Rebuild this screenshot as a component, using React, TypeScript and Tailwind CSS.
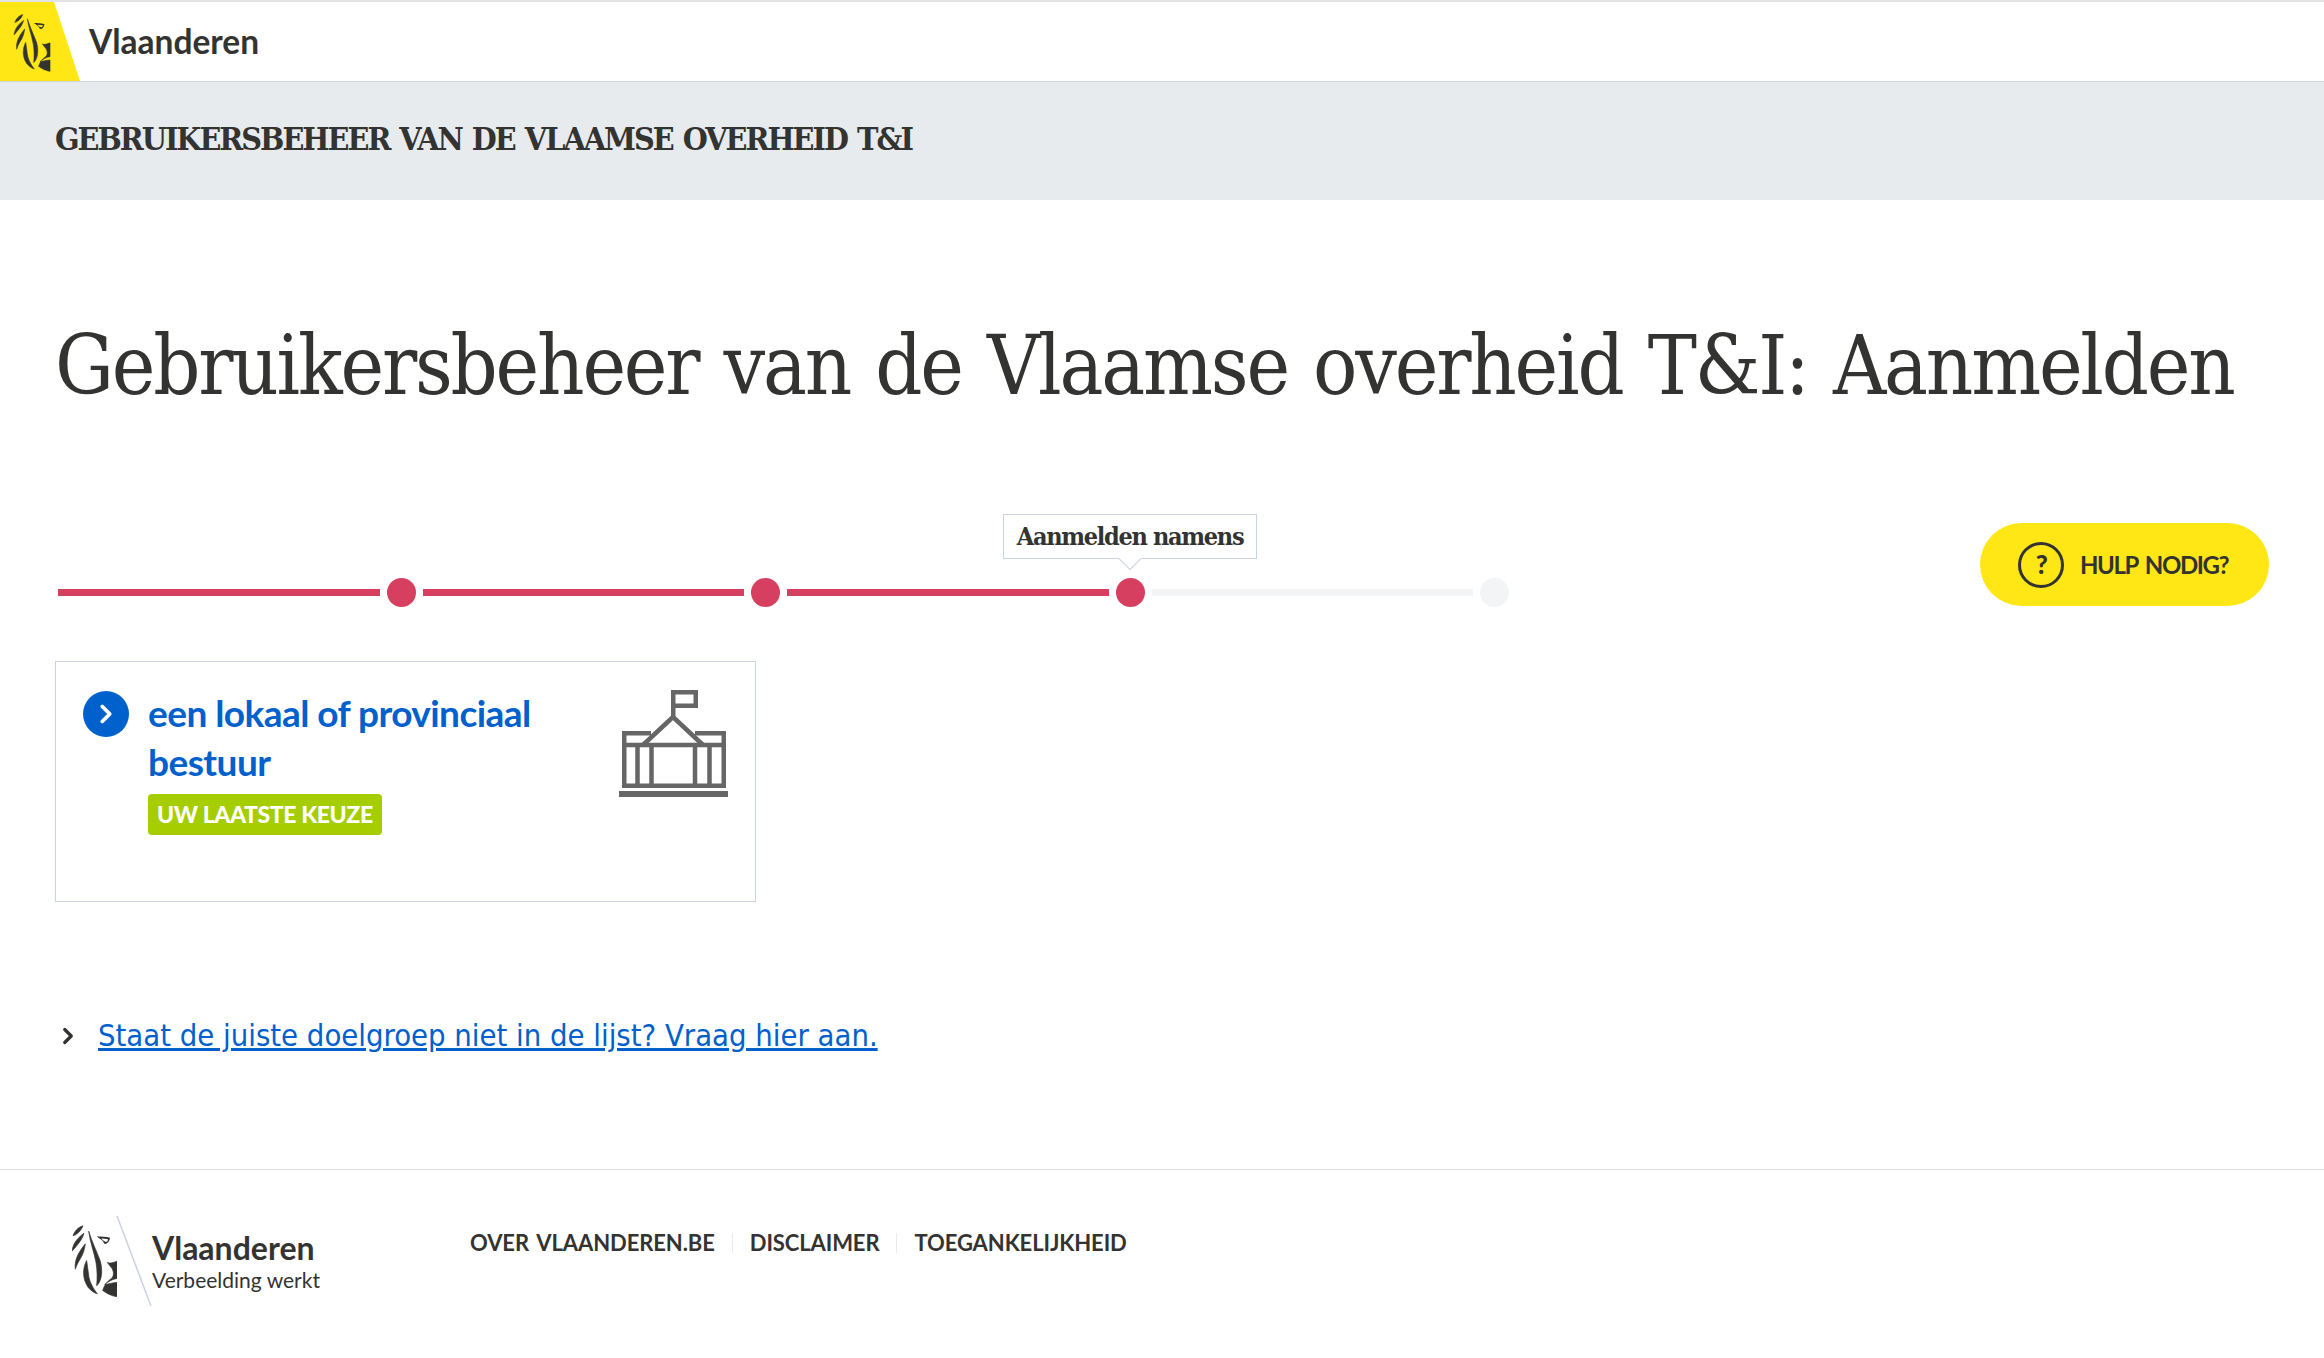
import { ChevronRight } from "lucide-react";

function LionPaths() {
    return (
        <g fill="#333332" stroke="#333332" strokeWidth="2">
            <path d="M33 2 C20 6 8 16 3 32 C16 28 28 16 33 2Z" />
            <path d="M36 24 C20 36 3 52 0 78 C6 72 9 68 14 62 C22 52 32 40 36 24Z" />
            <path d="M40 56 C24 76 6 100 10 132 C14 120 18 112 24 102 C32 90 38 74 40 56Z" />
            <path d="M44 106 C32 128 30 160 48 186 C56 196 66 203 76 206 C64 190 52 170 50 150 C48 135 46 120 44 106Z" />
            <path d="M50 18 C54 50 66 80 72 112 C76 136 76 160 74 182 C92 165 92 130 84 105 C74 78 60 50 50 18Z" />
            <path fillRule="evenodd" stroke="none" d="M74 34 C88 34 102 34 114 38 C113 50 104 58 97 56 C94 46 84 41 74 34Z M88 40 C93 47 99 50 105 50 C107 47 108 45 108 42 C102 41 95 40 88 40Z" />
            <path d="M106 112 C114 116 124 112 135 108 L135 160 C122 162 110 168 98 178 C106 178 122 172 135 172 L135 215 C118 212 104 205 92 196 C96 182 104 170 118 160 C126 154 126 140 120 130 C116 124 110 118 106 112Z" />
        </g>
    );
}

function BuildingIcon() {
    return (
        <svg viewBox="0 0 110 108" className="-mt-[1px] h-[108px] w-[110px]" fill="none" stroke="#666666" strokeWidth="4.5">
            <path d="M54.25 27 V2.25 H76.75 V15.75 H54.25" />
            <path d="M54 27 L24 55 M54 27 L84 55" />
            <path d="M32 43.25 H5.25 V95.75 H104.75 V43.25 H76" />
            <path d="M5 55 H105" />
            <path d="M18.5 55 V96 M32.5 55 V96 M76 55 V96 M90.5 55 V96" />
            <path d="M0 104 H109" strokeWidth="6" />
        </svg>
    );
}

function StepLine({ done }: { done: boolean }) {
    return <div className={done ? "h-[7px] w-[321.5px] bg-[#d63f5f]" : "h-[7px] w-[321.5px] bg-[#f3f4f6]"} />;
}

function StepDot({ done }: { done: boolean }) {
    return <div className={done ? "h-[29px] w-[29px] rounded-full bg-[#d63f5f]" : "h-[29px] w-[29px] rounded-full bg-[#f3f4f6]"} />;
}

export default function App() {
    return (
        <div className="flex min-h-[1358px] flex-col overflow-hidden bg-white text-[#333332] [font-family:Lato,sans-serif]">
            {/* Header */}
            <header className="flex h-[82px] items-center border-t-2 border-b border-t-[#e2e3e4] border-b-[#cfd5dd]">
                <svg viewBox="0 0 80 79" className="h-[79px] w-[80px] shrink-0">
                    <polygon points="0,0 54,0 80,79 0,79" fill="#ffe615" />
                    <g transform="translate(14 12) scale(0.267)">
                        <LionPaths />
                    </g>
                </svg>
                <span className="ml-[9px] text-[33.5px] font-bold leading-none">Vlaanderen</span>
            </header>
            <div className="flex h-[118px] items-center bg-[#e8ebee] pb-[4px] pl-[55px]">
                <h2 className="text-[32px] font-bold leading-none tracking-[-2px] [font-family:'DejaVu_Serif',serif] [font-stretch:condensed] [word-spacing:2px]">
                    GEBRUIKERSBEHEER VAN DE VLAAMSE OVERHEID T&amp;I
                </h2>
            </div>

            {/* Main */}
            <main className="flex-1 px-[55px]">
                <h1 className="mt-[113px] text-[82px] font-normal leading-[105px] tracking-[-2.2px] whitespace-nowrap [font-family:'DejaVu_Serif',serif] [font-stretch:condensed] [word-spacing:4px]">
                    Gebruikersbeheer van de Vlaamse overheid T&amp;I: Aanmelden
                </h1>

                <div className="mt-[96px] flex items-start justify-between">
                    <div className="relative flex items-center gap-[7px] pl-[3px] pt-[64px]">
                        <StepLine done />
                        <StepDot done />
                        <StepLine done />
                        <StepDot done />
                        <StepLine done />
                        <StepDot done />
                        <StepLine done={false} />
                        <StepDot done={false} />
                        <div className="absolute left-[948px] top-0 flex h-[45px] w-[254px] items-center justify-center border border-[#cbd2e0] bg-white text-[25px] font-bold tracking-[-1.3px] whitespace-nowrap [font-family:'DejaVu_Serif',serif] [font-stretch:condensed]">
                            Aanmelden namens
                            <span className="absolute -bottom-[9px] left-1/2 h-[16px] w-[16px] -translate-x-1/2 rotate-45 border-r border-b border-[#cbd2e0] bg-white" />
                        </div>
                    </div>
                    <button className="mt-[9px] flex h-[83px] w-[289px] items-center rounded-full bg-[#ffe615] pl-[38px] text-[24px] font-bold tracking-[-1.4px] [word-spacing:3px]">
                        <span className="flex h-[46px] w-[46px] items-center justify-center rounded-full border-[3px] border-[#333332] text-[26px] font-black">?</span>
                        <span className="ml-[16px]">HULP NODIG?</span>
                    </button>
                </div>

                <div className="mt-[54px] flex h-[241px] w-[701px] justify-between border border-[#cbd2e0] pl-[27px] pr-[26px] pt-[29px]">
                    <div className="flex items-start gap-[19px]">
                        <span className="flex h-[46px] w-[46px] shrink-0 items-center justify-center rounded-full bg-[#0060cc]">
                            <ChevronRight className="h-[30px] w-[30px] text-white" strokeWidth={3} />
                        </span>
                        <div>
                            <div className="-mt-[3px] w-[420px] text-[37px] font-bold leading-[49px] tracking-[-0.55px] text-[#0060cc]">
                                een lokaal of provinciaal bestuur
                            </div>
                            <span className="mt-[8px] inline-block rounded-[4px] bg-[#a5cd00] px-[9px] text-[23px] font-black leading-[41px] tracking-[-0.4px] text-white">
                                UW LAATSTE KEUZE
                            </span>
                        </div>
                    </div>
                    <BuildingIcon />
                </div>

                <div className="mt-[112px] flex items-center gap-[17px]">
                    <ChevronRight className="h-[26px] w-[26px]" strokeWidth={3} />
                    <a className="text-[30.7px] leading-[44px] text-[#0060cc] underline [font-family:'DejaVu_Sans',sans-serif] [font-stretch:condensed]">
                        Staat de juiste doelgroep niet in de lijst? Vraag hier aan.
                    </a>
                </div>
            </main>

            {/* Footer */}
            <footer className="flex h-[189px] items-start border-t border-[#d8dce3]">
                <div className="relative ml-[72px] mt-[41px] flex h-[100px] w-[398px] items-center">
                    <svg viewBox="0 0 135 215" className="h-[72px] w-[45px]">
                        <LionPaths />
                    </svg>
                    <svg viewBox="0 0 36 92" className="absolute left-[44px] top-[4px] h-[92px] w-[36px]">
                        <line x1="1" y1="1" x2="35" y2="91" stroke="#cbd2e0" strokeWidth="1.5" />
                    </svg>
                    <div className="ml-[35px]">
                        <div className="text-[32px] font-bold leading-[38px]">Vlaanderen</div>
                        <div className="text-[21px] leading-[26px]">Verbeelding werkt</div>
                    </div>
                </div>
                <nav className="mt-[56px] flex items-center text-[22px] font-bold tracking-[-0.1px] [word-spacing:3px]">
                    <a>OVER VLAANDEREN.BE</a>
                    <span className="mx-[17px] h-[20px] w-px bg-[#e8ebee]" />
                    <a>DISCLAIMER</a>
                    <span className="mx-[17px] h-[20px] w-px bg-[#e8ebee]" />
                    <a>TOEGANKELIJKHEID</a>
                </nav>
            </footer>
        </div>
    );
}
